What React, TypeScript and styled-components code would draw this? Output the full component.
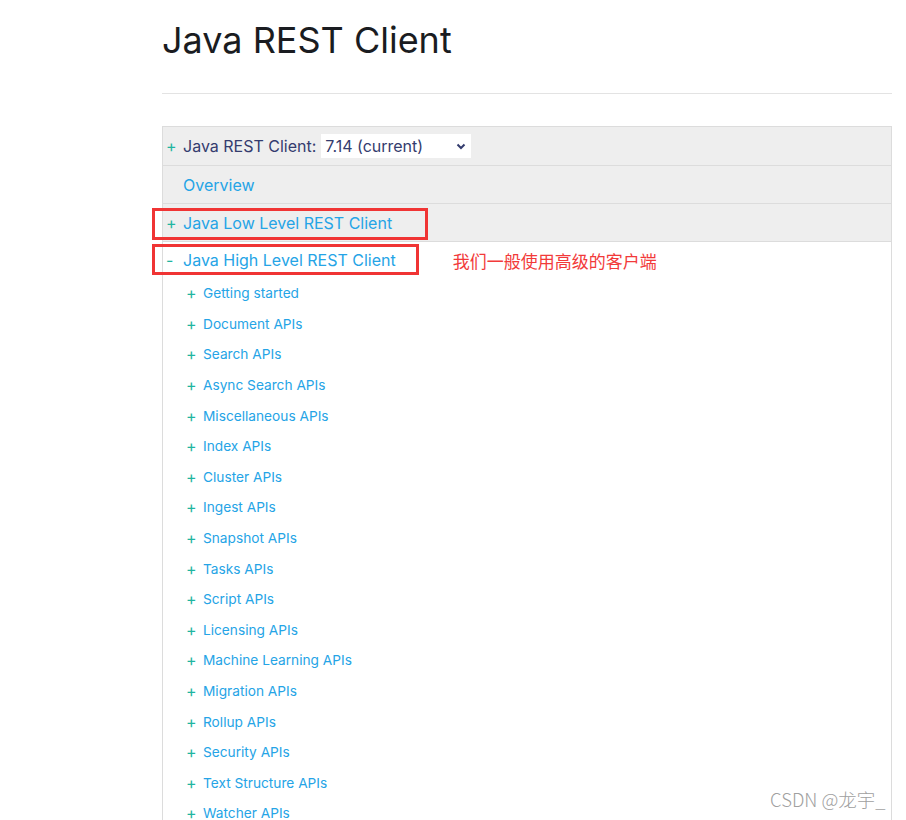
import React from "react";
import styled, { createGlobalStyle } from "styled-components";

const Global = createGlobalStyle`
  html, body { margin: 0; padding: 0; background: #fff; }
  body { font-family: Inter, "Noto Sans", sans-serif; }
`;

const Page = styled.div`
  position: relative;
  width: 906px;
  height: 820px;
  overflow: hidden;
  padding: 0 14px 0 162px;
  box-sizing: border-box;
`;

const Title = styled.h1`
  margin: 0;
  padding-top: 18px;
  font-size: 36px;
  line-height: 44px;
  font-weight: 400;
  color: #1a1c21;
  letter-spacing: 0;
`;

const Rule = styled.hr`
  margin: 31px 0 32px;
  border: 0;
  border-top: 1px solid #e3e3e3;
`;

const Panel = styled.div`
  border-left: 1px solid #dcdcdc;
  border-right: 1px solid #dcdcdc;
  border-top: 1px solid #dcdcdc;
`;

const Row = styled.div<{ $h: number; $gray?: boolean }>`
  display: flex;
  align-items: center;
  height: ${(p) => p.$h}px;
  background: ${(p) => (p.$gray ? "#eeeeee" : "#fff")};
  border-bottom: ${(p) => (p.$gray ? "1px solid #dcdcdc" : "0")};
  padding-left: 3px;
  font-size: 16px;
`;

const Sign = styled.span<{ $w?: number }>`
  display: inline-block;
  width: ${(p) => p.$w ?? 17}px;
  color: #1fb5a0;
  font-size: 16px;
`;

const Label = styled.span`
  color: #343c6e;
`;

const Link = styled.a<{ $size?: number }>`
  color: #25a4e6;
  text-decoration: none;
  font-size: ${(p) => p.$size ?? 16}px;
`;

const Select = styled.div`
  display: flex;
  align-items: center;
  justify-content: space-between;
  margin-left: 5px;
  width: 150px;
  height: 24px;
  background: #fff;
  color: #343c6e;
  padding: 0 4px;
  box-sizing: border-box;
  font-size: 16px;
`;

const Note = styled.span`
  margin-left: 57px;
  color: #f23a3a;
  font-family: "Noto Sans CJK SC", sans-serif;
  font-size: 17px;
`;

const List = styled.ul`
  list-style: none;
  margin: 0;
  padding: 0 0 0 23px;
`;

const Item = styled.li`
  display: flex;
  align-items: center;
  height: 30.6px;
`;

const Box = styled.div<{ $l: number; $t: number; $w: number; $h: number }>`
  position: absolute;
  left: ${(p) => p.$l}px;
  top: ${(p) => p.$t}px;
  width: ${(p) => p.$w}px;
  height: ${(p) => p.$h}px;
  border: 3px solid #f03434;
  box-sizing: border-box;
  pointer-events: none;
`;

const Watermark = styled.div`
  position: absolute;
  left: 770px;
  top: 786px;
  color: #a0a0a0;
  font-family: "Noto Sans CJK SC", sans-serif;
  font-size: 18.5px;
  font-weight: 300;
`;

const items = [
  "Getting started",
  "Document APIs",
  "Search APIs",
  "Async Search APIs",
  "Miscellaneous APIs",
  "Index APIs",
  "Cluster APIs",
  "Ingest APIs",
  "Snapshot APIs",
  "Tasks APIs",
  "Script APIs",
  "Licensing APIs",
  "Machine Learning APIs",
  "Migration APIs",
  "Rollup APIs",
  "Security APIs",
  "Text Structure APIs",
  "Watcher APIs",
];

const Chevron = () => (
  <svg width="12" height="12" viewBox="0 0 12 12">
    <path d="M2.5 4.5 L6 8 L9.5 4.5" fill="none" stroke="#343c6e" strokeWidth="2" />
  </svg>
);

export default function App() {
  return (
    <>
      <Global />
      <Page>
        <Title>Java REST Client</Title>
        <Rule />
        <Panel>
          <Row $h={38} $gray>
            <Sign>+</Sign>
            <Label>Java REST Client:</Label>
            <Select>
              <span>7.14 (current)</span>
              <Chevron />
            </Select>
          </Row>
          <Row $h={37} $gray>
            <Sign />
            <Link href="#">Overview</Link>
          </Row>
          <Row $h={37} $gray>
            <Sign>+</Sign>
            <Link href="#">Java Low Level REST Client</Link>
          </Row>
          <Row $h={36}>
            <Sign>-</Sign>
            <Link href="#">Java High Level REST Client</Link>
            <Note>我们一般使用高级的客户端</Note>
          </Row>
          <List>
            {items.map((t) => (
              <Item key={t}>
                <Sign>+</Sign>
                <Link href="#" $size={13.7}>{t}</Link>
              </Item>
            ))}
          </List>
        </Panel>
        <Box $l={152} $t={208} $w={276} $h={32} />
        <Box $l={152} $t={244} $w={267} $h={31} />
        <Watermark>CSDN @龙宇_</Watermark>
      </Page>
    </>
  );
}
